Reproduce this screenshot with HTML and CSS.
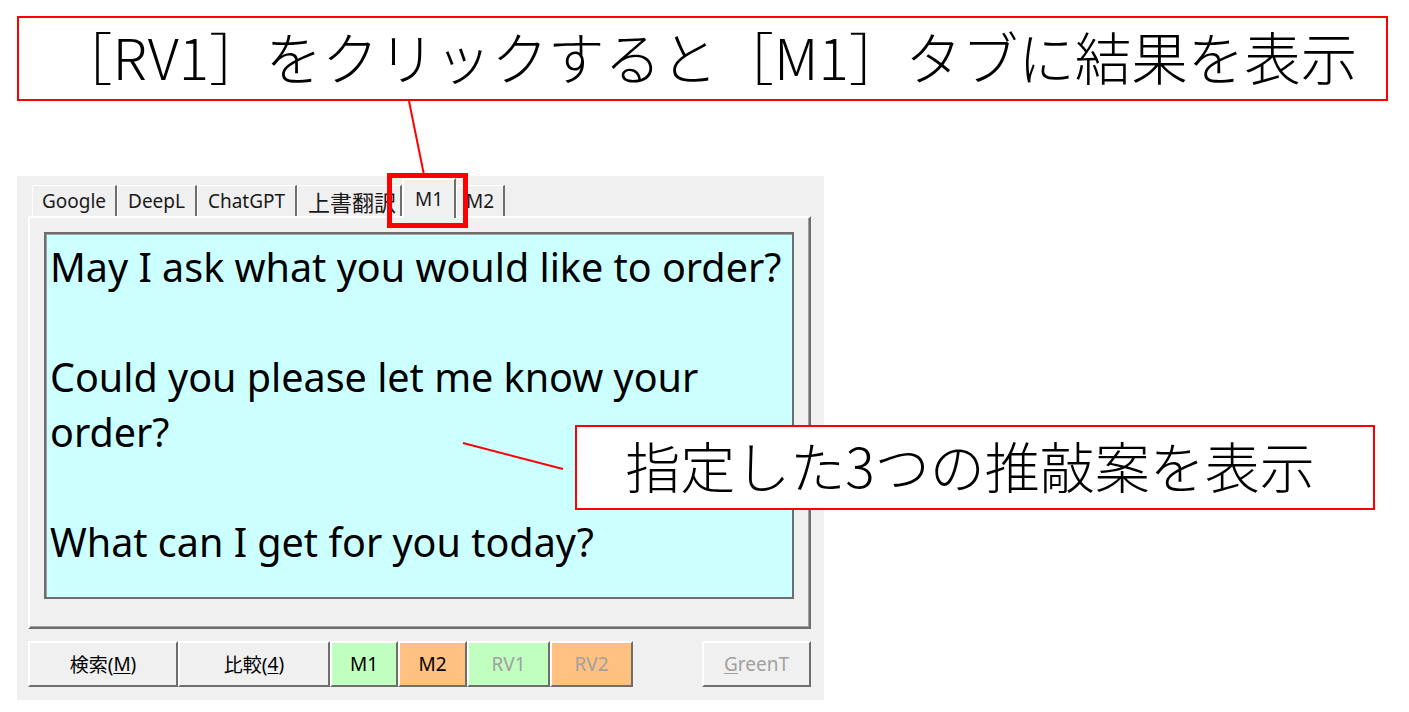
FILE: index.html
```html
<!DOCTYPE html>
<html lang="ja">
<head>
<meta charset="utf-8">
<title>RV1</title>
<link rel="stylesheet" href="styles.css">
</head>
<body>
<div class="page">
  <div class="callout callout-top">［RV1］をクリックすると［M1］タブに結果を表示</div>

  <div class="window">
    <div class="tabs">
      <div class="tab tab-google">Google</div>
      <div class="tab tab-deepl">DeepL</div>
      <div class="tab tab-chatgpt">ChatGPT</div>
      <div class="tab tab-uwagaki">上書翻訳</div>
      <div class="tab tab-m1 selected">M1</div>
      <div class="tab tab-m2">M2</div>
    </div>
    <div class="panel">
      <div class="textbox">
        <div class="line">May I ask what you would like to order?</div>
        <div class="line">&nbsp;</div>
        <div class="line">Could you please let me know your</div>
        <div class="line">order?</div>
        <div class="line">&nbsp;</div>
        <div class="line">What can I get for you today?</div>
      </div>
    </div>
    <div class="buttons">
      <div class="btn btn-search">検索(<u>M</u>)</div>
      <div class="btn btn-compare">比較(<u>4</u>)</div>
      <div class="btn btn-m1 green">M1</div>
      <div class="btn btn-m2 orange">M2</div>
      <div class="btn btn-rv1 green disabled">RV1</div>
      <div class="btn btn-rv2 orange disabled">RV2</div>
      <div class="spacer"></div>
      <div class="btn btn-greent disabled"><u>G</u>reenT</div>
    </div>
  </div>

  <div class="highlight"></div>
  <div class="callout callout-mid">指定した3つの推敲案を表示</div>
  <svg class="leaders" width="1409" height="712" viewBox="0 0 1409 712">
    <line x1="409" y1="101" x2="424" y2="175" stroke="#ff0000" stroke-width="2"/>
    <line x1="463" y1="443" x2="563" y2="469" stroke="#ff0000" stroke-width="2"/>
  </svg>
</div>
</body>
</html>
```

FILE: styles.css
```css
html, body {
  margin: 0;
  padding: 0;
  background: #ffffff;
}

.page {
  position: relative;
  width: 1409px;
  height: 712px;
  overflow: hidden;
  padding-top: 16px;
  box-sizing: border-box;
  font-family: "Noto Sans", "Noto Sans CJK JP", sans-serif;
}

.callout {
  box-sizing: border-box;
  border: 2px solid #ff0000;
  background: #ffffff;
  color: #000000;
  font-family: "Noto Sans CJK JP", "Noto Sans", sans-serif;
  font-weight: 300;
  display: flex;
  align-items: center;
  white-space: nowrap;
}

.callout-top {
  margin-left: 17px;
  width: 1371px;
  height: 85px;
  font-size: 56.5px;
  padding-left: 37px;
  padding-bottom: 8px;
}

.callout-mid {
  position: absolute;
  left: 575px;
  top: 425px;
  width: 800px;
  height: 85px;
  font-size: 55px;
  justify-content: center;
  padding-right: 10px;
  padding-bottom: 8px;
}

.window {
  margin-top: 75px;
  margin-left: 17px;
  width: 807px;
  height: 524px;
  box-sizing: border-box;
  background: #f0f0f0;
  padding: 2px 13px 0 11px;
  font-size: 19px;
  color: #000000;
}

.tabs {
  display: flex;
  align-items: flex-end;
  height: 38px;
  padding-left: 4px;
  position: relative;
  z-index: 2;
}

.tab {
  box-sizing: border-box;
  height: 31px;
  background: #f0f0f0;
  border-top: 1px solid #ffffff;
  border-left: 1px solid #ffffff;
  border-right: 2px solid #6e6e6e;
  display: flex;
  align-items: center;
  justify-content: center;
  white-space: nowrap;
  overflow: hidden;
  color: #1a1a1a;
}

.tab-google { width: 85px; }
.tab-deepl { width: 80px; }
.tab-chatgpt { width: 100px; }
.tab-uwagaki { width: 105px; justify-content: flex-start; padding-left: 10px; font-size: 22px; }
.tab-m1 { width: 54px; }
.tab-m2 { width: 49px; }

.tab.selected {
  height: 40px;
  margin-bottom: -2px;
  align-items: flex-start;
  padding-top: 6px;
  border-top: 2px solid #ffffff;
  border-left: 2px solid #ffffff;
}

.panel {
  box-sizing: border-box;
  height: 413px;
  border-top: 2px solid #ffffff;
  border-left: 2px solid #ffffff;
  border-right: 2px solid #6e6e6e;
  border-bottom: 2px solid #6e6e6e;
  box-shadow: inset -1px -1px 0 #a0a0a0;
  padding: 14px 15px 28px 14px;
}

.textbox {
  box-sizing: border-box;
  height: 100%;
  background: #ccffff;
  border: 2px solid #6e6e6e;
  box-shadow: inset 1px 1px 0 #a0a0a0;
  padding: 6px 0 0 4px;
  font-family: "Noto Sans", sans-serif;
  font-size: 39.5px;
  line-height: 55px;
  color: #000000;
}

.line {
  white-space: nowrap;
}

.buttons {
  display: flex;
  margin-top: 12px;
  height: 46px;
}

.btn {
  box-sizing: border-box;
  height: 46px;
  background: #f0f0f0;
  border-top: 2px solid #ffffff;
  border-left: 2px solid #ffffff;
  border-right: 2px solid #6e6e6e;
  border-bottom: 2px solid #6e6e6e;
  display: flex;
  align-items: center;
  justify-content: center;
  white-space: nowrap;
  color: #000000;
}

.btn u {
  text-underline-offset: 2px;
}

.btn-search { width: 150px; }
.btn-compare { width: 152px; }
.btn-m1 { width: 68px; }
.btn-m2 { width: 69px; }
.btn-rv1 { width: 83px; }
.btn-rv2 { width: 83px; }
.btn-greent { width: 109px; }

.spacer { flex: 1; }

.green { background: #c0ffc0; }
.orange { background: #ffc080; }
.disabled { color: #a0a0a0; }

.highlight {
  position: absolute;
  left: 387px;
  top: 173px;
  width: 81px;
  height: 55px;
  box-sizing: border-box;
  border: 5px solid #ff0000;
  z-index: 5;
}

.leaders {
  position: absolute;
  left: 0;
  top: 0;
  pointer-events: none;
  z-index: 6;
}
```
